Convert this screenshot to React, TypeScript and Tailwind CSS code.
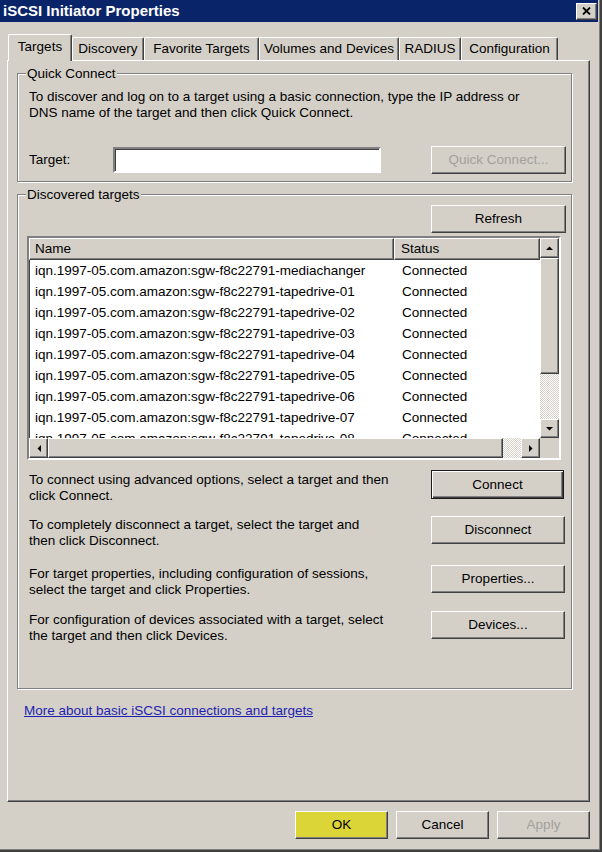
import React from 'react';

const raised =
  'border border-t-white border-l-white border-r-[#404040] border-b-[#404040] shadow-[inset_-1px_-1px_0_#808080]';
const sunken =
  'border-2 border-t-[#808080] border-l-[#808080] border-r-white border-b-white';
const etched = 'border border-[#808080] shadow-[inset_1px_1px_0_#ffffff,1px_1px_0_#ffffff]';
const checker =
  'bg-[repeating-conic-gradient(#ffffff_0%_25%,#d4d0c8_0%_50%)] bg-[length:2px_2px]';

const targets = [
  'mediachanger',
  'tapedrive-01',
  'tapedrive-02',
  'tapedrive-03',
  'tapedrive-04',
  'tapedrive-05',
  'tapedrive-06',
  'tapedrive-07',
  'tapedrive-08',
];

const tabs = [
  { label: 'Targets', w: 'w-[64px]', active: true },
  { label: 'Discovery', w: 'w-[72px]' },
  { label: 'Favorite Targets', w: 'w-[115px]' },
  { label: 'Volumes and Devices', w: 'w-[140px]' },
  { label: 'RADIUS', w: 'w-[62px]' },
  { label: 'Configuration', w: 'w-[97px]' },
];

interface BtnProps {
  label: string;
  className?: string;
  disabled?: boolean;
  isDefault?: boolean;
}

const Btn = ({ label, className = 'w-[135px] h-[28px]', disabled, isDefault }: BtnProps) => (
  <button
    className={`${className} flex items-center justify-center ${
      isDefault
        ? 'border border-[#1a1a1a] shadow-[inset_1px_1px_0_#ffffff,inset_-1px_-1px_0_#404040,inset_-2px_-2px_0_#808080]'
        : raised
    } ${disabled ? 'text-[#a3a09a]' : 'text-black'}`}
  >
    {label}
  </button>
);

const Arrow = ({ dir }: { dir: 'up' | 'down' | 'left' | 'right' }) => {
  const pts = {
    up: '0,4 7,4 3.5,0.5',
    down: '0,0 7,0 3.5,3.5',
    left: '4,0 4,7 0.5,3.5',
    right: '0,0 0,7 3.5,3.5',
  }[dir];
  const vertical = dir === 'up' || dir === 'down';
  return (
    <svg width={vertical ? 7 : 4} height={vertical ? 4 : 7} viewBox={vertical ? '0 0 7 4' : '0 0 4 7'}>
      <polygon points={pts} fill="#000" />
    </svg>
  );
};

const ScrollBtn = ({ dir, className }: { dir: 'up' | 'down' | 'left' | 'right'; className: string }) => (
  <div className={`${className} ${raised} bg-[#d4d0c8] flex items-center justify-center shrink-0`}>
    <Arrow dir={dir} />
  </div>
);

const ActionRow = ({
  lines,
  button,
  rowClass,
  textClass,
  isDefault,
}: {
  lines: [string, string];
  button: string;
  rowClass: string;
  textClass: string;
  isDefault?: boolean;
}) => (
  <div className={`flex ${rowClass}`}>
    <div className={`w-[404px] pl-[2px] whitespace-nowrap ${textClass}`}>
      {lines[0]}
      <br />
      {lines[1]}
    </div>
    <Btn label={button} className={isDefault ? 'w-[133px] h-[29px]' : 'w-[134px] h-[28px]'} isDefault={isDefault} />
  </div>
);

export default function App() {
  return (
    <div className="w-[602px] h-[852px] bg-[#d4d0c8] border-r-2 border-b-2 border-[#404040] font-['Liberation_Sans',Arial,sans-serif] text-[13.5px] leading-[16px] text-black overflow-hidden">
      <div className="h-[850px] border-r border-b border-[#808080] flex flex-col">
        {/* title bar */}
        <div className="h-[22px] w-[598px] bg-[#0a246a] flex items-center justify-between pl-[3px] pr-[1px]">
          <span className="text-white font-bold text-[15px]">iSCSI Initiator Properties</span>
          <div className={`w-[21px] h-[17px] ${raised} bg-[#d4d0c8] flex items-center justify-center`}>
            <svg width="9" height="8" viewBox="0 0 9 8">
              <path d="M1 0.5 L8 7.5 M8 0.5 L1 7.5" stroke="#000" strokeWidth="1.8" />
            </svg>
          </div>
        </div>

        {/* tabs */}
        <div className="mt-[12px] h-[26px] pl-[8px] flex items-end">
          {tabs.map((t) =>
            t.active ? (
              <div
                key={t.label}
                className={`${t.w} h-[27px] -mb-px relative z-10 bg-[#d4d0c8] border-l border-t border-white border-r border-r-[#404040] shadow-[inset_-1px_0_0_#808080] rounded-t-[2px] flex items-center justify-center pb-[3px]`}
              >
                {t.label}
              </div>
            ) : (
              <div
                key={t.label}
                className={`${t.w} h-[23px] border-l border-t border-white border-r border-r-[#404040] shadow-[inset_-1px_0_0_#808080] rounded-t-[2px] flex items-center justify-center whitespace-nowrap`}
              >
                {t.label}
              </div>
            )
          )}
        </div>

        {/* tab panel */}
        <div className={`ml-[7px] w-[583px] h-[742px] ${raised} flex flex-col`}>
          <fieldset className={`ml-[9px] mt-[5px] w-[555px] h-[116px] ${etched}`}>
            <legend className="ml-[8px] px-[1px] bg-[#d4d0c8] leading-[15px]">Quick Connect</legend>
            <div className="pl-[11px] pt-[8px]">
              <div className="whitespace-nowrap">
                To discover and log on to a target using a basic connection, type the IP address or
                <br />
                DNS name of the target and then click Quick Connect.
              </div>
              <div className="mt-[25px] flex items-center">
                <span className="w-[84px]">Target:</span>
                <div className={`w-[268px] h-[26px] bg-white ${sunken} shadow-[inset_1px_1px_0_#404040]`} />
                <div className="ml-[50px]">
                  <Btn label="Quick Connect..." disabled />
                </div>
              </div>
            </div>
          </fieldset>

          <fieldset className={`ml-[9px] mt-[5px] w-[555px] h-[502px] ${etched}`}>
            <legend className="ml-[8px] px-[1px] bg-[#d4d0c8] leading-[15px]">Discovered targets</legend>
            <div className="pl-[9px] pt-[3px] flex flex-col">
              <div className="ml-[404px]">
                <Btn label="Refresh" />
              </div>

              {/* list view */}
              <div className={`mt-[3px] w-[534px] h-[224px] ${sunken} shadow-[inset_1px_1px_0_#404040] bg-white flex flex-col`}>
                <div className="flex h-[200px]">
                  <div className="w-[511px] overflow-hidden">
                    <div className="flex h-[22px] bg-[#d4d0c8]">
                      <div className={`w-[365px] ${raised} flex items-center pl-[5px]`}>Name</div>
                      <div className={`flex-1 ${raised} flex items-center pl-[6px]`}>Status</div>
                    </div>
                    {targets.map((t) => (
                      <div key={t} className="flex h-[21px] items-center">
                        <span className="w-[365px] pl-[6px] whitespace-nowrap">
                          iqn.1997-05.com.amazon:sgw-f8c22791-{t}
                        </span>
                        <span className="pl-[8px]">Connected</span>
                      </div>
                    ))}
                  </div>
                  <div className="w-[19px] flex flex-col">
                    <ScrollBtn dir="up" className="h-[20px]" />
                    <div className={`h-[116px] ${raised} bg-[#d4d0c8]`} />
                    <div className={`flex-1 ${checker}`} />
                    <ScrollBtn dir="down" className="h-[19px]" />
                  </div>
                </div>
                <div className="flex h-[20px]">
                  <div className="w-[511px] flex">
                    <ScrollBtn dir="left" className="w-[19px]" />
                    <div className={`w-[455px] ${raised} bg-[#d4d0c8]`} />
                    <div className={`flex-1 ${checker}`} />
                    <ScrollBtn dir="right" className="w-[19px]" />
                  </div>
                  <div className="w-[19px] bg-[#d4d0c8]" />
                </div>
              </div>

              <ActionRow
                rowClass="mt-[10px] h-[46px]"
                textClass="pt-[2px]"
                lines={['To connect using advanced options, select a target and then', 'click Connect.']}
                button="Connect"
                isDefault
              />
              <ActionRow
                rowClass="h-[49px]"
                textClass="pt-[1px]"
                lines={['To completely disconnect a target, select the target and', 'then click Disconnect.']}
                button="Disconnect"
              />
              <ActionRow
                rowClass="h-[46px]"
                textClass="pt-[1px]"
                lines={['For target properties, including configuration of sessions,', 'select the target and click Properties.']}
                button="Properties..."
              />
              <ActionRow
                rowClass="h-[46px]"
                textClass="pt-[1px]"
                lines={['For configuration of devices associated with a target, select', 'the target and then click Devices.']}
                button="Devices..."
              />
            </div>
          </fieldset>

          <a className="mt-[14px] ml-[16px] text-[#1f1fb0] underline w-fit cursor-pointer">
            More about basic iSCSI connections and targets
          </a>
        </div>

        {/* dialog buttons */}
        <div className="mt-[9px] flex justify-end gap-[8px] pr-[9px]">
          <button className={`w-[93px] h-[28px] ${raised} bg-[#dbd537] text-black`}>OK</button>
          <Btn label="Cancel" className="w-[93px] h-[28px]" />
          <Btn label="Apply" className="w-[93px] h-[28px]" disabled />
        </div>
      </div>
    </div>
  );
}
